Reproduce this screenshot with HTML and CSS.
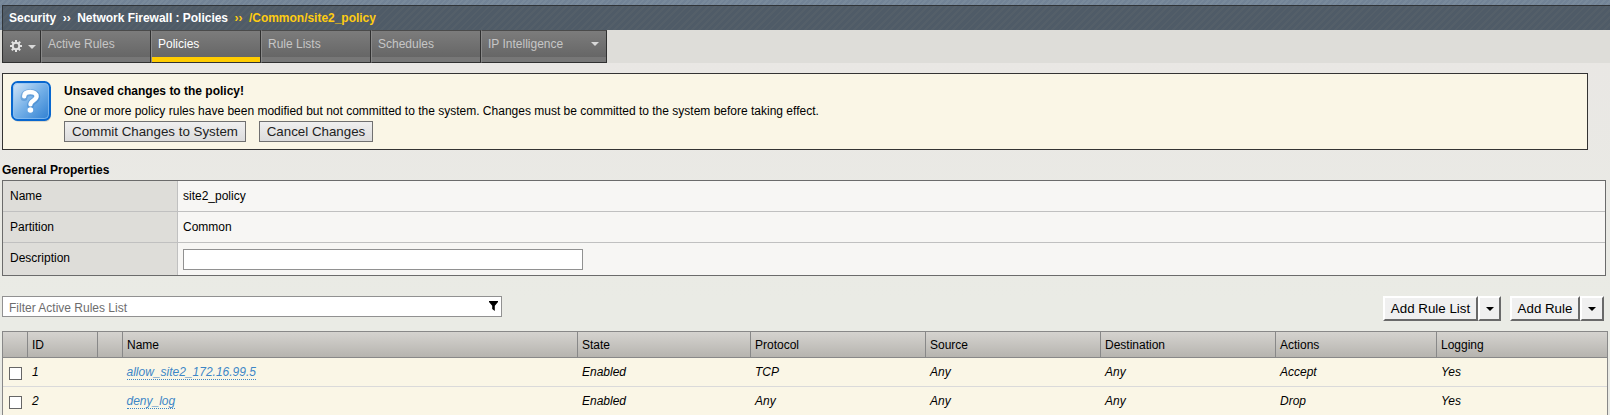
FILE: index.html
```html
<!DOCTYPE html>
<html lang="en">
<head>
<meta charset="utf-8">
<title>Network Firewall : Policies</title>
<link rel="stylesheet" href="styles.css">
</head>
<body>
<header class="top">
  <div class="crumbs">
    <span>Security</span><span class="sep">››</span><span>Network Firewall : Policies</span><span class="sep current">››</span><span class="current">/Common/site2_policy</span>
  </div>
</header>
<nav class="nav">
  <div class="tab gear">
    <svg class="gear-icon" width="14" height="14" viewBox="0 0 14 14"><g stroke="#e2e2e2" stroke-width="2"><path d="M7 1v12M1 7h12M2.8 2.8l8.4 8.4M11.2 2.8l-8.4 8.4"/></g><circle cx="7" cy="7" r="3.3" fill="#6e6e6e" stroke="#e2e2e2" stroke-width="2"/></svg>
    <i class="caret"></i>
  </div>
  <div class="tab">Active Rules</div>
  <div class="tab active">Policies</div>
  <div class="tab">Rule Lists</div>
  <div class="tab">Schedules</div>
  <div class="tab last">IP Intelligence<i class="caret"></i></div>
</nav>
<main>
  <section class="alert">
    <svg class="help" width="44" height="45" viewBox="0 0 44 45">
      <defs><linearGradient id="blue" x1="0" y1="0" x2="1" y2="1"><stop offset="0" stop-color="#d8e8f8"/><stop offset=".5" stop-color="#74b0e8"/><stop offset="1" stop-color="#2c7dd0"/></linearGradient></defs>
      <rect x="3" y="4" width="38" height="38" rx="6" fill="#000" opacity=".12"/>
      <rect x="2.5" y="3" width="38" height="38" rx="6" fill="#000" opacity=".18"/>
      <rect x="2" y="2" width="38" height="38" rx="5.5" fill="url(#blue)" stroke="#0867cf" stroke-width="2"/>
      <rect x="3.5" y="3.5" width="35" height="35" rx="4" fill="none" stroke="#8fc2f2" opacity=".7"/>
      <path d="M14 17.500C14 14 16.800 12.500 20.300 12.500c3.900 0 6.400 1.800 6.400 4.500 0 4-6.200 4.300-6.200 8" fill="none" stroke="#2c74be" stroke-width="7" stroke-linecap="round" opacity=".35"/>
      <path d="M14.200 16.300C14.200 13 16.800 12 20.300 12c3.900 0 6.300 1.800 6.300 4.300 0 4-6.100 4.300-6.100 8" fill="none" stroke="#fff" stroke-width="4.400" stroke-linecap="round"/>
      <circle cx="20.400" cy="30" r="2.800" fill="#fff"/>
    </svg>
    <div class="alert-body">
      <strong>Unsaved changes to the policy!</strong>
      <p>One or more policy rules have been modified but not committed to the system. Changes must be committed to the system before taking effect.</p>
      <div class="actions"><button class="btn commit">Commit Changes to System</button><button class="btn cancel">Cancel Changes</button></div>
    </div>
  </section>
  <h2>General Properties</h2>
  <div class="props">
    <div class="label">Name</div><div class="value">site2_policy</div>
    <div class="label">Partition</div><div class="value">Common</div>
    <div class="label">Description</div><div class="value field"><input class="desc" type="text" aria-label="Description"></div>
  </div>
  <div class="toolbar">
    <div class="filter"><span>Filter Active Rules List</span><svg width="9" height="10" viewBox="0 0 9 10"><path d="M0 0h9v1L5.800 4.700V10L3.200 8V4.700L0 1z"/></svg></div>
    <div class="adds">
      <div class="split"><button class="raised list">Add Rule List</button><button class="raised drop" aria-label="More"><i class="caret"></i></button></div>
      <div class="split"><button class="raised rule">Add Rule</button><button class="raised drop" aria-label="More"><i class="caret"></i></button></div>
    </div>
  </div>
  <div class="rules">
    <div class="row head"><div></div><div>ID</div><div></div><div>Name</div><div>State</div><div>Protocol</div><div>Source</div><div>Destination</div><div>Actions</div><div>Logging</div></div>
    <div class="row"><div><i class="check"></i></div><div>1</div><div></div><div><a>allow_site2_172.16.99.5</a></div><div>Enabled</div><div>TCP</div><div>Any</div><div>Any</div><div>Accept</div><div>Yes</div></div>
    <div class="row"><div><i class="check"></i></div><div>2</div><div></div><div><a>deny_log</a></div><div>Enabled</div><div>Any</div><div>Any</div><div>Any</div><div>Drop</div><div>Yes</div></div>
  </div>
</main>
</body>
</html>
```
FILE: styles.css
```css
* { box-sizing: border-box; }
body {
  margin: 0;
  height: 415px;
  overflow: hidden;
  background: linear-gradient(#e9e7e4 60px, #eaebe5 300px);
  font: 12px/14px "Liberation Sans", Arial, sans-serif;
  color: #000;
}
.top {
  height: 30px;
  padding: 5px 0 0 2px;
  background: repeating-linear-gradient(135deg, #728396 0 2px, #798a9b 2px 4px);
}
.crumbs {
  display: flex;
  height: 25px;
  padding: 5px 0 0 6px;
  border-top: 1px solid #303438;
  border-left: 1px solid #303438;
  background: repeating-linear-gradient(135deg, #4f5b67 0 3px, #545f69 3px 5px);
  color: #fff;
  font-weight: bold;
  letter-spacing: -0.02px;
}
.crumbs .sep { margin: 0 6.5px; }
.crumbs .current { color: #fc1; }
.nav {
  display: flex;
  height: 33px;
  padding-left: 2px;
  background: #deddd9;
}
.tab {
  display: flex;
  width: 110px;
  padding: 6px 0 0 6px;
  border-top: 1px solid #4a4a4a;
  border-right: 1px solid #303030;
  border-bottom: 1px solid #303030;
  border-left: 1px solid #8a8a8a;
  background: linear-gradient(#777, #777) bottom / 100% 5px no-repeat, linear-gradient(#7c7c7c, #626262);
  color: #c6c6c6;
}
.tab.gear {
  width: 39px;
  padding: 8px 0 0 6px;
  border-left-color: #303030;
  background: linear-gradient(#7c7c7c, #626262);
}
.tab.active {
  background: linear-gradient(#fc0, #fc0) bottom / 100% 5px no-repeat, linear-gradient(#7c7c7c, #626262);
  color: #fff;
}
.tab.last { width: 126px; }
.caret {
  width: 0;
  height: 0;
  border: 4px solid transparent;
  border-top-color: #d8d8d8;
  border-bottom: 0;
}
.gear .caret { margin: 6px 0 0 5px; }
.last .caret { margin: 5px 7px 0 auto; }
main { padding-left: 2px; }
.alert {
  display: flex;
  width: 1586px;
  height: 77px;
  margin-top: 10px;
  padding: 6px 0 0 7px;
  border: 1px solid #333;
  background: #faf6e6;
}
.help { flex: none; }
.alert-body { padding: 4px 0 0 10px; }
.alert strong, .alert p { display: block; }
.alert p { margin: 6px 0 3px; white-space: nowrap; }
.actions { display: flex; gap: 13px; }
.btn {
  height: 21px;
  padding: 0;
  border: 1px solid #707070;
  background: linear-gradient(#efefef, #dcdcdc);
  color: #222;
  font: 13.333px/17px "Liberation Sans", Arial, sans-serif;
}
.commit { width: 182px; }
.cancel { width: 114px; }
h2 { margin: 13px 0 3px; font-size: 12px; line-height: 14px; }
.props {
  display: grid;
  grid-template-columns: 175px 1fr;
  grid-template-rows: 31px 31px 32px;
  width: 1604px;
  height: 96px;
  border: 1px solid #6b6b6b;
  background: #f7f6f4;
}
.props > div { border-bottom: 1px solid #c0c0c0; }
.props > div:nth-last-child(-n+2) { border-bottom: 0; }
.label { padding: 8px 7px 0; border-right: 1px solid #c0c0c0; background: #deddd9; }
.value { padding: 8px 5px 0; }
.field { padding-top: 6px; }
.desc { display: block; width: 400px; height: 21px; border: 1px solid #919191; background: #fff; }
.toolbar { display: flex; justify-content: space-between; width: 1602px; height: 55px; padding-top: 20px; }
.filter {
  display: flex;
  justify-content: space-between;
  width: 500px;
  height: 21px;
  padding: 4px 3px 0 6px;
  border: 1px solid #919191;
  background: #fff;
  color: #6d6d6d;
}
.adds { display: flex; gap: 9px; }
.split { display: flex; }
.raised {
  height: 25px;
  padding: 0;
  border: 2px solid;
  border-color: #fff #696969 #696969 #fff;
  background: #f0f0f0;
  color: #000;
  font: 13.333px/18px "Liberation Sans", Arial, sans-serif;
}
.list { width: 95px; }
.rule { width: 70px; }
.drop { display: flex; width: 24px; align-items: center; justify-content: center; }
.split:first-child .drop { width: 23px; }
.drop .caret { border-top-color: #000; }
.rules { width: 1606px; border: 1px solid #888; border-bottom: 0; }
.row {
  display: grid;
  grid-template-columns: 25px 70px 25px 455px 173px 175px 175px 175px 161px 1fr;
  height: 29px;
  border-bottom: 1px solid #dadada;
  background: #faf6e6;
  font-style: italic;
}
.row > div { padding: 7px 4px 0; }
.row > div:first-child { padding: 9px 0 0 6px; }
.row.head {
  height: 26px;
  border-bottom-color: #888;
  background: linear-gradient(#d5d3cf, #b6b4af);
  font-style: normal;
}
.row.head > div { padding-top: 6px; border-right: 1px solid #888; }
.row.head > div:last-child { border-right: 0; }
.row a { display: block; width: fit-content; height: 15px; margin-left: -0.5px; border-bottom: 1px dotted #3d86c6; color: #3d86c6; }
.check { display: block; width: 13px; height: 13px; border: 1px solid #666; background: #fff; }
```
